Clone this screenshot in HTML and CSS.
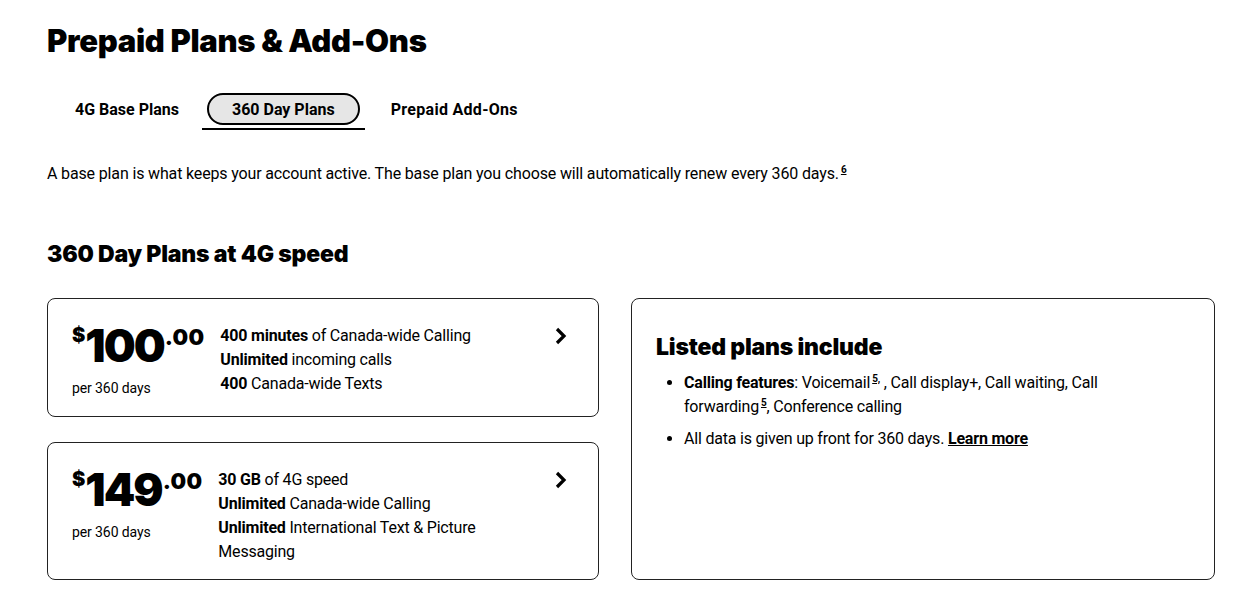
FILE: index.html
```html
<!DOCTYPE html>
<html lang="en">
<head>
  <meta charset="UTF-8">
  <title>Prepaid Plans &amp; Add-Ons</title>
  <link rel="stylesheet" href="styles.css">
</head>
<body>
  <div class="pagina">
    <h1 class="titulo">Prepaid Plans &amp; Add-Ons</h1>

    <div class="tabs">
      <button class="tab">4G Base Plans</button>
      <div class="tab-activo"><button class="tab pill">360 Day Plans</button></div>
      <button class="tab">Prepaid Add-Ons</button>
    </div>

    <p class="intro">A base plan is what keeps your account active. The base plan you choose will automatically renew every 360 days.<sup class="nota">6</sup></p>

    <h2 class="subtitulo">360 Day Plans at 4G speed</h2>

    <div class="rejilla">
      <div class="planes">
        <div class="plan">
          <div class="precio">
            <div class="monto"><span class="signo">$</span><span class="entero">100</span><span class="cent">.00</span></div>
            <div class="periodo">per 360 days</div>
          </div>
          <ul class="detalles">
            <li><b>400 minutes</b> of Canada-wide Calling</li>
            <li><b>Unlimited</b> incoming calls</li>
            <li><b>400</b> Canada-wide Texts</li>
          </ul>
          <svg class="flecha" width="14" height="18" viewBox="0 0 14 18"><path d="M3 2l7 7-7 7" fill="none" stroke="#000" stroke-width="3.2"/></svg>
        </div>

        <div class="plan">
          <div class="precio">
            <div class="monto"><span class="signo">$</span><span class="entero">149</span><span class="cent">.00</span></div>
            <div class="periodo">per 360 days</div>
          </div>
          <ul class="detalles">
            <li><b>30 GB</b> of 4G speed</li>
            <li><b>Unlimited</b> Canada-wide Calling</li>
            <li><b>Unlimited</b> International Text &amp; Picture Messaging</li>
          </ul>
          <svg class="flecha" width="14" height="18" viewBox="0 0 14 18"><path d="M3 2l7 7-7 7" fill="none" stroke="#000" stroke-width="3.2"/></svg>
        </div>
      </div>

      <div class="incluye">
        <h3>Listed plans include</h3>
        <ul>
          <li><b>Calling features</b>: Voicemail<sup class="nota">5,</sup> , Call display+, Call waiting, Call forwarding<sup class="nota">5</sup>, Conference calling</li>
          <li>All data is given up front for 360 days. <a href="#">Learn more</a></li>
        </ul>
      </div>
    </div>
  </div>
</body>
</html>
```

FILE: styles.css
```css
body { margin: 0; font-family: Roboto, Arial, sans-serif; color: #000; background: #fff; }
.pagina { padding: 21px 32px 0 47px; }

.titulo, .subtitulo, .incluye h3, .monto { font-family: Inter, Roboto, Arial, sans-serif; font-weight: 900; }
.titulo { font-size: 31px; letter-spacing: -0.3px; margin: 0 0 32px; line-height: 40px; }

.tabs { display: flex; align-items: flex-start; margin-left: 20px; }
.tab { font-family: Roboto, Arial, sans-serif; font-weight: 700; font-size: 16px; letter-spacing: 0; background: none; border: none; padding: 0 8px; height: 32px; color: #000; cursor: pointer; }
.tabs > .tab:first-child { margin-right: 15px; }
.tabs > .tab:last-child { margin-left: 20px; padding: 0 6px; letter-spacing: 0.3px; }
.tab-activo { border-bottom: 2px solid #000; padding: 0 5px 3px; }
.pill { background: #e6e6e6; border: 2px solid #000; border-radius: 16px; padding: 0 23px; }

.intro { font-size: 16px; letter-spacing: -0.15px; margin: 32px 0 0; line-height: 24px; }
.nota { font-size: 10px; font-weight: 700; text-decoration: underline; vertical-align: 6px; line-height: 0; margin-left: 2px; }

.subtitulo { font-size: 23px; letter-spacing: -0.2px; margin: 53px 0 0; line-height: 30px; }

.rejilla { display: grid; grid-template-columns: 552px 584px; gap: 32px; margin-top: 29px; }
.planes { display: flex; flex-direction: column; gap: 25px; }

.plan { border: 1px solid #222; border-radius: 8px; display: flex; align-items: flex-start; padding: 25px 30px 15px 24px; }
.precio { flex: none; margin-right: 16px; padding-bottom: 3px; }
.monto { display: flex; align-items: flex-start; line-height: 1; }
.signo { font-size: 20px; margin-top: 1px; }
.entero { font-size: 45px; letter-spacing: -2px; line-height: 44px; }
.cent { font-size: 22px; letter-spacing: 0.3px; margin-top: 2px; margin-left: 1px; }
.periodo { font-size: 14px; letter-spacing: -0.1px; margin-top: 10px; line-height: 20px; }

.detalles { list-style: none; margin: 0; padding: 0; flex: 1; font-size: 16px; letter-spacing: -0.2px; line-height: 24px; max-width: 290px; }
.detalles b { font-weight: 700; }
.flecha { flex: none; margin-top: 3px; margin-left: auto; }

.incluye { border: 1px solid #222; border-radius: 8px; padding: 33px 40px 20px 24px; }
.incluye h3 { font-size: 23px; letter-spacing: -0.2px; margin: 0 0 9px; line-height: 30px; }
.incluye ul { margin: 0; padding-left: 28px; font-size: 16px; letter-spacing: -0.2px; line-height: 24px; }
.incluye li { margin-bottom: 8px; }
.incluye a { color: #000; font-weight: 700; }
```
